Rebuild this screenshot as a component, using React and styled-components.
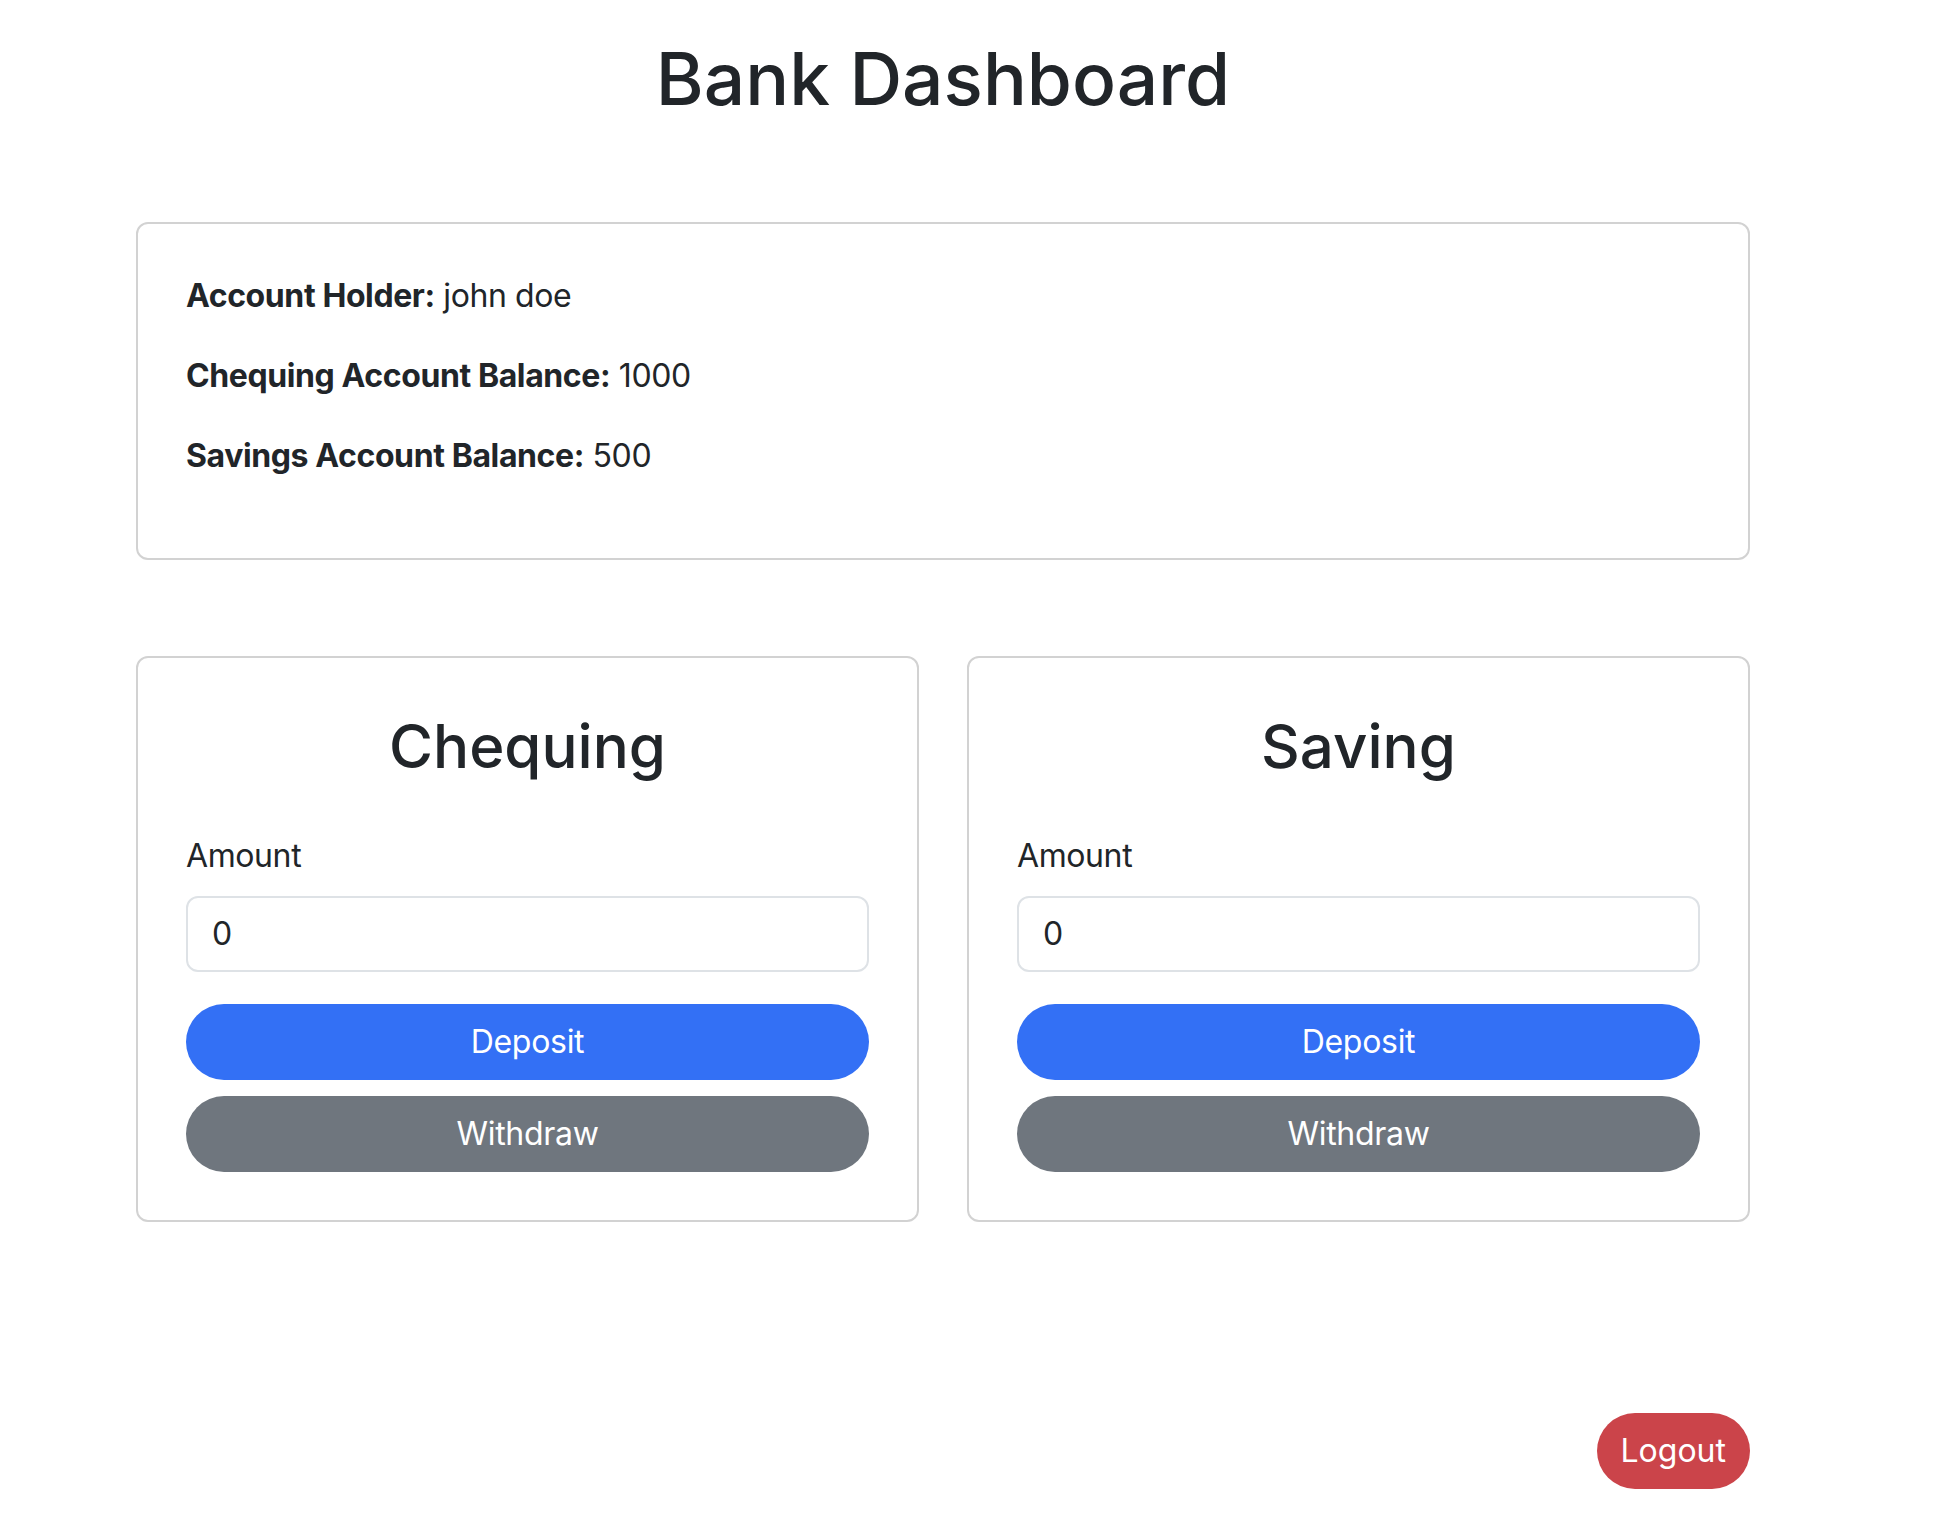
import React, { useState } from 'react';
import styled, { createGlobalStyle } from 'styled-components';

const GlobalStyle = createGlobalStyle`
  body {
    margin: 0;
    background: #ffffff;
    color: #212529;
    font-family: Inter, "Noto Sans", "Liberation Sans", sans-serif;
  }
  * {
    box-sizing: border-box;
  }
`;

function AccountCard({ title }) {
  const [amount, setAmount] = useState(0);

  return (
    <Card>
      <CardTitle>{title}</CardTitle>
      <Label>Amount</Label>
      <AmountInput
        type="number"
        value={amount}
        onChange={(e) => setAmount(e.target.value)}
      />
      <PillButton $color="#3370f5">Deposit</PillButton>
      <PillButton $color="#6f767e">Withdraw</PillButton>
    </Card>
  );
}

function App() {
  return (
    <>
      <GlobalStyle />
      <Page>
        <Title>Bank Dashboard</Title>
        <InfoCard>
          <InfoLine>
            <strong>Account Holder:</strong> john doe
          </InfoLine>
          <InfoLine>
            <strong>Chequing Account Balance:</strong> 1000
          </InfoLine>
          <InfoLine>
            <strong>Savings Account Balance:</strong> 500
          </InfoLine>
        </InfoCard>
        <CardRow>
          <AccountCard title="Chequing" />
          <AccountCard title="Saving" />
        </CardRow>
        <Footer>
          <LogoutButton>Logout</LogoutButton>
        </Footer>
      </Page>
    </>
  );
}

const Page = styled.div`
  width: 1614px;
  margin-left: 136px;
  padding-top: 35px;
`;

const Title = styled.h1`
  margin: 0;
  text-align: center;
  font-size: 73px;
  font-weight: 500;
  line-height: 1.2;
`;

const InfoCard = styled.div`
  margin-top: 99px;
  border: 2px solid #d2d2d2;
  border-radius: 12px;
  padding: 48px 48px 46px;
`;

const InfoLine = styled.p`
  margin: 0 0 32px;
  font-size: 32px;
  line-height: 48px;
  letter-spacing: -0.4px;
  strong {
    font-weight: 700;
  }
`;

const CardRow = styled.div`
  display: grid;
  grid-template-columns: 1fr 1fr;
  gap: 48px;
  margin-top: 96px;
`;

const Card = styled.div`
  display: flex;
  flex-direction: column;
  border: 2px solid #d2d2d2;
  border-radius: 12px;
  padding: 48px;
`;

const CardTitle = styled.h2`
  margin: 4px 0 50px;
  text-align: center;
  font-size: 60px;
  font-weight: 500;
  line-height: 72px;
`;

const Label = styled.label`
  display: block;
  margin-bottom: 16px;
  font-size: 32px;
  line-height: 48px;
  letter-spacing: -0.4px;
`;

const AmountInput = styled.input`
  height: 76px;
  width: 100%;
  padding: 0 24px;
  border: 2px solid #dee2e6;
  border-radius: 12px;
  font-family: inherit;
  font-size: 32px;
  color: #212529;
  outline: none;
  -moz-appearance: textfield;
  &::-webkit-outer-spin-button,
  &::-webkit-inner-spin-button {
    -webkit-appearance: none;
    margin: 0;
  }
`;

const PillButton = styled.button`
  height: 76px;
  width: 100%;
  margin-top: 16px;
  border: none;
  border-radius: 38px;
  background-color: ${(p) => p.$color};
  color: #ffffff;
  font-family: inherit;
  font-size: 32px;
  letter-spacing: -0.3px;
  cursor: pointer;
  &:first-of-type {
    margin-top: 32px;
  }
`;

const Footer = styled.div`
  display: flex;
  justify-content: flex-end;
  margin-top: 191px;
`;

const LogoutButton = styled.button`
  height: 76px;
  padding: 0 24px;
  border: none;
  border-radius: 38px;
  background-color: #cb444a;
  color: #ffffff;
  font-family: inherit;
  font-size: 32px;
  cursor: pointer;
`;

export default App;
